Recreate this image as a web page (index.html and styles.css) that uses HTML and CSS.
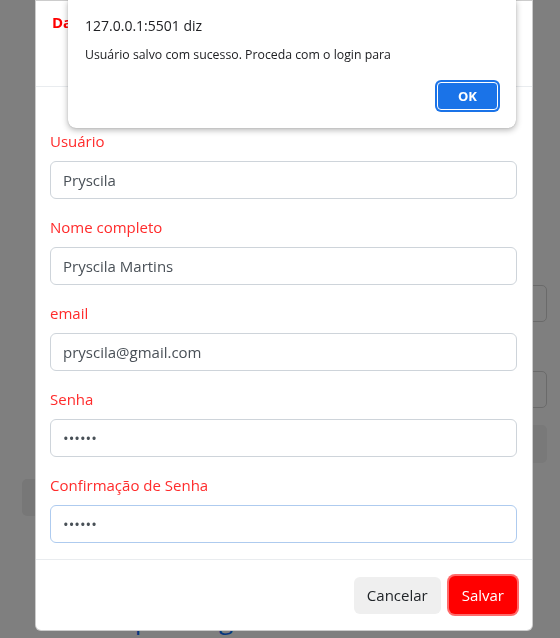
FILE: index.html
```html
<!DOCTYPE html>
<html lang="pt-BR">
<head>
<meta charset="utf-8">
<title>Cadastro</title>
<link rel="stylesheet" href="styles.css">
</head>
<body>
<div class="page">
  <div class="bg-input"></div>
  <div class="bg-input bg-input-2"></div>
  <div class="bg-btn-wide"></div>
  <div class="bg-btn"></div>
  <h2 class="bg-link">Ir para login</h2>
</div>

<div class="backdrop"></div>

<div class="modal">
  <div class="modal-header">
    <h5 class="modal-title">Dados</h5>
  </div>
  <div class="modal-body">
    <div class="field">
      <label class="field-label">Usuário</label>
      <input class="form-control" type="text" value="Pryscila">
    </div>
    <div class="field">
      <label class="field-label">Nome completo</label>
      <input class="form-control" type="text" value="Pryscila Martins">
    </div>
    <div class="field">
      <label class="field-label">email</label>
      <input class="form-control" type="text" value="pryscila@gmail.com">
    </div>
    <div class="field">
      <label class="field-label">Senha</label>
      <input class="form-control" type="password" value="123456">
    </div>
    <div class="field">
      <label class="field-label">Confirmação de Senha</label>
      <input class="form-control form-control-focus" type="password" value="123456">
    </div>
  </div>
  <div class="modal-footer">
    <button class="btn btn-cancel" type="button">Cancelar</button>
    <button class="btn btn-save" type="button">Salvar</button>
  </div>
</div>

<div class="alert-dialog">
  <div class="alert-title">127.0.0.1:5501 diz</div>
  <div class="alert-message">Usuário salvo com sucesso. Proceda com o login para</div>
  <div class="alert-actions">
    <button class="alert-ok" type="button">OK</button>
  </div>
</div>
</body>
</html>
```

FILE: styles.css
```css
* {
  box-sizing: border-box;
}

html, body {
  margin: 0;
  padding: 0;
  height: 100%;
  overflow: hidden;
  background: #ffffff;
  font-family: "Open Sans", "Noto Sans", "DejaVu Sans", sans-serif;
}

/* background page (under the backdrop) */
.page {
  width: 547px;
  padding: 285px 0 0 22px;
  display: flex;
  flex-direction: column;
}

.bg-input {
  height: 37px;
  margin-left: 20px;
  border: 1px solid #d4d4d4;
  border-radius: 5px;
  margin-bottom: 49px;
}

.bg-input-2 {
  margin-bottom: 17px;
}

.bg-btn-wide {
  height: 38px;
  margin-left: 20px;
  background: #f2f2f2;
  border-radius: 5px;
  margin-bottom: 16px;
}

.bg-btn {
  width: 110px;
  height: 37px;
  background: #eeeeee;
  border-radius: 5px;
}

.bg-link {
  margin: 87px 0 0 0;
  padding-left: 88px;
  font-size: 26px;
  line-height: 32px;
  font-weight: 400;
  color: #0d6efd;
  white-space: nowrap;
}

.backdrop {
  position: fixed;
  inset: 0;
  background: rgba(0, 0, 0, 0.5);
}

/* modal */
.modal {
  position: fixed;
  left: 35px;
  top: 0;
  width: 498px;
  height: 631px;
  background: #ffffff;
  border: 1px solid rgba(0, 0, 0, 0.2);
  border-radius: 0 0 6px 6px;
  display: flex;
  flex-direction: column;
}

.modal-header {
  height: 86px;
  padding: 11px 16px 0 16px;
  border-bottom: 1px solid #e9ecef;
}

.modal-title {
  margin: 0;
  font-size: 15px;
  line-height: 20px;
  font-weight: 700;
  color: #ff0000;
}

.modal-body {
  height: 472px;
  padding: 42px 15px 0 14px;
}

.field {
  margin-bottom: 16px;
}

.field-label {
  display: block;
  font-size: 15px;
  line-height: 24px;
  margin-bottom: 8px;
  color: #ff2b2b;
}

.form-control {
  display: block;
  width: 100%;
  height: 38px;
  padding: 0 12px;
  border: 1px solid #ced4da;
  border-radius: 6px;
  font-family: inherit;
  font-size: 15px;
  color: #495057;
  background: #ffffff;
  outline: none;
}

.form-control-focus {
  border-color: #aecbef;
}

.modal-footer {
  flex: 1;
  border-top: 1px solid #e9ecef;
  display: flex;
  justify-content: flex-end;
  align-items: center;
  gap: 8px;
  padding: 0 15px 0 16px;
}

.btn {
  height: 38px;
  padding: 0 12px;
  border: 1px solid transparent;
  border-radius: 6px;
  font-family: inherit;
  font-size: 15px;
  line-height: 1;
  cursor: pointer;
}

.btn-cancel {
  height: 37px;
  background: #efefef;
  color: #212529;
}

.btn-save {
  background: #ff0000;
  color: #ffffff;
  box-shadow: 0 0 0 2px #ff6a6a;
}

/* browser alert */
.alert-dialog {
  position: fixed;
  left: 68px;
  top: 0;
  width: 448px;
  height: 128px;
  background: #ffffff;
  border-radius: 0 0 8px 8px;
  box-shadow: 0 2px 6px rgba(0, 0, 0, 0.3), 0 0 1px rgba(0, 0, 0, 0.3);
  padding: 17px 16px 0 17px;
  color: #202124;
}

.alert-title {
  font-size: 14px;
  line-height: 18px;
}

.alert-message {
  margin-top: 11px;
  font-size: 12.3px;
  line-height: 18px;
}

.alert-actions {
  display: flex;
  justify-content: flex-end;
  margin-top: 18px;
  padding-right: 2px;
}

.alert-ok {
  width: 61px;
  height: 28px;
  background: #1a73e8;
  border: 1px solid #ffffff;
  border-radius: 4px;
  box-shadow: 0 0 0 2px #1a73e8;
  color: #ffffff;
  font-family: inherit;
  font-weight: 700;
  font-size: 13px;
}
```
